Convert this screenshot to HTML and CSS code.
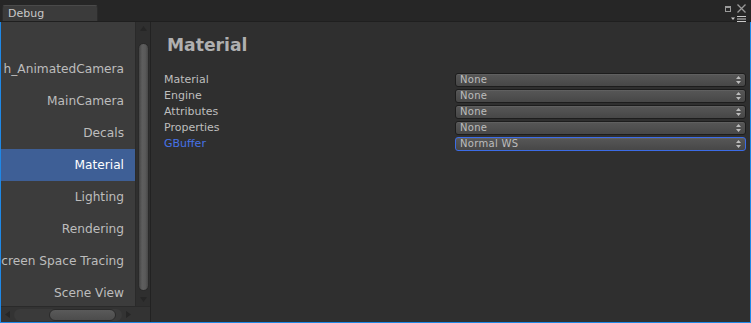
FILE: index.html
```html
<!DOCTYPE html>
<html>
<head>
<meta charset="utf-8">
<link rel="stylesheet" href="styles.css">
</head>
<body>
<div class="window">
  <div class="titlebar">
    <div class="tab">Debug</div>
    <div class="winctrls">
      <div class="ctrl-top">
        <svg class="ic-max" width="6" height="6" viewBox="0 0 6 6"><rect x="0.5" y="0.5" width="5" height="5" fill="none" stroke="#9a9a9a" stroke-width="1"/><rect x="0" y="0" width="6" height="2" fill="#9a9a9a"/></svg>
        <svg class="ic-close" width="9" height="9" viewBox="0 0 9 9"><path d="M0.5 0.5 L8.5 8.5 M8.5 0.5 L0.5 8.5" stroke="#9a9a9a" stroke-width="1.3"/></svg>
      </div>
      <div class="ctrl-bottom">
        <svg width="15" height="6" viewBox="0 0 15 6"><path d="M0 1.5 L4 1.5 L2 4 Z" fill="#c8c8c8"/><rect x="6" y="0" width="9" height="1" fill="#c8c8c8"/><rect x="6" y="2.5" width="9" height="1" fill="#c8c8c8"/><rect x="6" y="5" width="9" height="1" fill="#c8c8c8"/></svg>
      </div>
    </div>
  </div>
  <div class="body">
    <div class="sidebar">
      <div class="sidebar-main">
        <ul class="list">
          <li class="item"><span>h_AnimatedCamera</span></li>
          <li class="item"><span>MainCamera</span></li>
          <li class="item"><span>Decals</span></li>
          <li class="item selected"><span>Material</span></li>
          <li class="item"><span>Lighting</span></li>
          <li class="item"><span>Rendering</span></li>
          <li class="item"><span>Screen Space Tracing</span></li>
          <li class="item"><span>Scene View</span></li>
        </ul>
        <div class="vscroll">
          <svg class="arrow" width="7" height="5" viewBox="0 0 7 5"><path d="M0 5 L3.5 0 L7 5 Z" fill="#262626"/></svg>
          <div class="vthumb"></div>
          <svg class="arrow" width="7" height="5" viewBox="0 0 7 5"><path d="M0 0 L3.5 5 L7 0 Z" fill="#262626"/></svg>
        </div>
      </div>
      <div class="sidebar-bottom">
        <div class="hscroll">
          <svg class="harrow" width="5" height="7" viewBox="0 0 5 7"><path d="M5 0 L0 3.5 L5 7 Z" fill="#262626"/></svg>
          <div class="htrack"><div class="hthumb"></div></div>
          <svg class="harrow" width="5" height="7" viewBox="0 0 5 7"><path d="M0 0 L5 3.5 L0 7 Z" fill="#262626"/></svg>
        </div>
        <div class="corner"></div>
      </div>
    </div>
    <div class="divider"></div>
    <div class="content">
      <h1 class="heading">Material</h1>
      <div class="fields">
        <div class="label">Material</div>
        <div class="dropdown"><span>None</span><svg class="updown" width="5" height="8" viewBox="0 0 5 8"><path d="M0 3 L2.5 0 L5 3 Z M0 5 L2.5 8 L5 5 Z" fill="#bdbdbd"/></svg></div>
        <div class="label">Engine</div>
        <div class="dropdown"><span>None</span><svg class="updown" width="5" height="8" viewBox="0 0 5 8"><path d="M0 3 L2.5 0 L5 3 Z M0 5 L2.5 8 L5 5 Z" fill="#bdbdbd"/></svg></div>
        <div class="label">Attributes</div>
        <div class="dropdown"><span>None</span><svg class="updown" width="5" height="8" viewBox="0 0 5 8"><path d="M0 3 L2.5 0 L5 3 Z M0 5 L2.5 8 L5 5 Z" fill="#bdbdbd"/></svg></div>
        <div class="label">Properties</div>
        <div class="dropdown"><span>None</span><svg class="updown" width="5" height="8" viewBox="0 0 5 8"><path d="M0 3 L2.5 0 L5 3 Z M0 5 L2.5 8 L5 5 Z" fill="#bdbdbd"/></svg></div>
        <div class="label active">GBuffer</div>
        <div class="dropdown focus"><span>Normal WS</span><svg class="updown" width="5" height="8" viewBox="0 0 5 8"><path d="M0 3 L2.5 0 L5 3 Z M0 5 L2.5 8 L5 5 Z" fill="#bdbdbd"/></svg></div>
      </div>
    </div>
  </div>
</div>
</body>
</html>
```
FILE: styles.css
```css
* { box-sizing: border-box; }
html, body { margin: 0; padding: 0; background: #282828; }
body { font-family: "DejaVu Sans", "Liberation Sans", sans-serif; }

.window {
  width: 751px;
  height: 323px;
  display: flex;
  flex-direction: column;
  background: #282828;
  overflow: hidden;
}

.titlebar {
  height: 22px;
  flex: none;
  display: flex;
  align-items: flex-end;
  justify-content: space-between;
  background: #262626;
  border-bottom: 1px solid #1f1f1f;
  padding-left: 2px;
}

.tab {
  width: 96px;
  height: 16px;
  background: #3b3b3b;
  border: 1px solid #2c2c2c;
  border-bottom: none;
  border-top-color: #4a4a4a;
  border-radius: 3px 3px 0 0;
  color: #c8c8c8;
  font-size: 11px;
  line-height: 16px;
  padding-left: 5px;
}

.winctrls {
  align-self: stretch;
  width: 30px;
  margin-right: 5px;
  display: flex;
  flex-direction: column;
  align-items: flex-end;
  padding-top: 4px;
}
.ctrl-top { display: flex; align-items: center; gap: 6px; height: 9px; }
.ctrl-bottom { margin-top: 3px; display: flex; }

.body {
  flex: 1;
  display: flex;
  border: 1px solid #1f88e6;
  border-top: none;
  min-height: 0;
}

.sidebar {
  width: 149px;
  flex: none;
  display: flex;
  flex-direction: column;
}

.sidebar-main {
  flex: 1;
  display: flex;
  min-height: 0;
}

.list {
  list-style: none;
  margin: 0;
  padding: 31px 0 0 0;
  width: 134px;
  background: #3c3c3c;
  overflow: hidden;
}

.item {
  height: 32px;
  display: flex;
  align-items: center;
  justify-content: flex-end;
  padding-right: 11px;
  white-space: nowrap;
  overflow: hidden;
  color: #bdbdbd;
  font-size: 12.2px;
}
.item.selected {
  background: #3e5f96;
  color: #ffffff;
}

.vscroll {
  width: 15px;
  background: #2f2f2f;
  border-left: 1px solid #2a2a2a;
  display: flex;
  flex-direction: column;
  align-items: center;
  padding: 4px 0 4px;
  gap: 4px;
}
.vscroll .arrow { flex: none; }
.vthumb {
  flex: 1;
  width: 11px;
  margin-top: 8px;
  margin-bottom: 2px;
  border-radius: 6px;
  background: linear-gradient(to right, #444 0%, #5e5e5e 35%, #5a5a5a 70%, #474747 100%);
  border: 1px solid #2a2a2a;
}

.sidebar-bottom {
  height: 16px;
  flex: none;
  display: flex;
  background: #333333;
  border-top: 1px solid #2a2a2a;
}

.hscroll {
  width: 134px;
  display: flex;
  align-items: center;
  padding: 0 4px;
  gap: 4px;
}
.harrow { flex: none; }
.htrack {
  flex: 1;
  height: 12px;
  border-radius: 6px;
  background: #3a3a3a;
  display: flex;
  padding-left: 35px;
  padding-right: 6px;
}
.hthumb {
  flex: 1;
  height: 12px;
  border-radius: 6px;
  background: linear-gradient(#5a5a5a, #4c4c4c);
  border: 1px solid #2a2a2a;
}
.corner {
  flex: 1;
  background: #333333;
}

.divider {
  width: 1px;
  flex: none;
  background: #222;
}

.content {
  flex: 1;
  background: #2f2f2f;
  padding: 13px 3px 0 13px;
}

.heading {
  margin: 0 0 0 3px;
  font-size: 17.2px;
  font-weight: bold;
  color: #b0b0b0;
  line-height: 20px;
}

.fields {
  margin-top: 18px;
  display: grid;
  grid-template-columns: 291px 291px;
  row-gap: 2px;
  align-items: center;
}

.label {
  font-size: 11px;
  color: #bebebe;
  line-height: 14px;
}
.label.active { color: #4672e6; }

.dropdown {
  height: 14px;
  display: flex;
  align-items: center;
  justify-content: space-between;
  padding: 0 4px 0 4px;
  border: 1px solid #1d1d1d;
  border-radius: 3px;
  background: linear-gradient(#575757, #474747);
  box-shadow: inset 0 1px 0 rgba(255,255,255,0.06);
  color: #bdbdbd;
  font-size: 10px;
  letter-spacing: 0.3px;
}
.dropdown.focus {
  border-color: #3c6ce6;
}
.dropdown span { line-height: 12px; }
.updown { flex: none; }
```
